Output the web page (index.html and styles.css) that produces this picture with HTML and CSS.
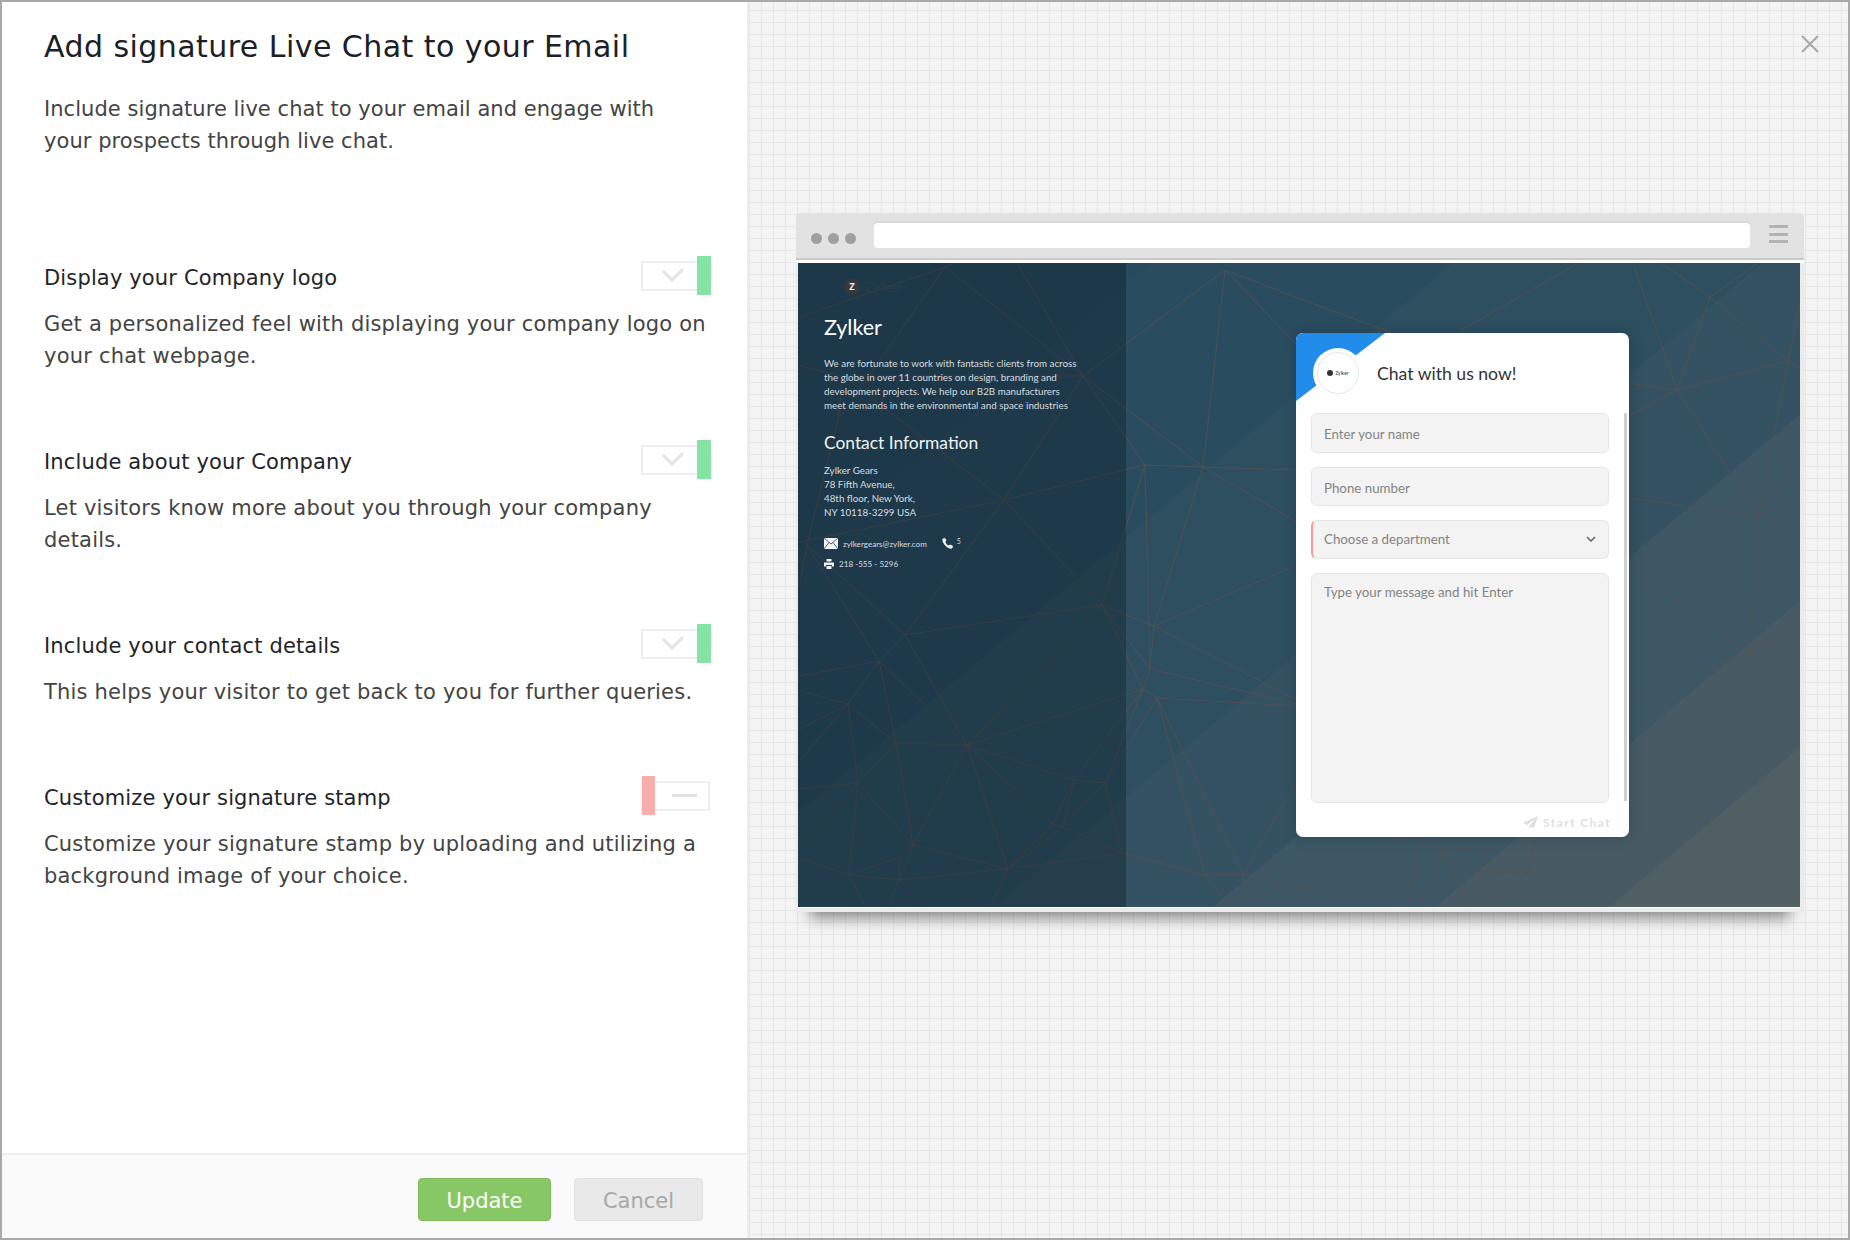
FILE: index.html
```html
<!DOCTYPE html>
<html lang="en">
<head>
    <meta charset="UTF-8">
    <meta name="viewport" content="width=device-width, initial-scale=1.0">
    <title>Add signature Live Chat to your Email</title>
    <link rel="stylesheet" href="styles.css">
</head>
<body>
    <div class="page">
        <div class="settings">
            <div class="settings-body">
                <h1>Add signature Live Chat to your Email</h1>
                <p class="intro">Include signature live chat to your email and engage with<br>your prospects through live chat.</p>

                <div class="option">
                    <div class="option-head">
                        <h2>Display your Company logo</h2>
                        <div class="toggle">
                            <span class="toggle-box">
                                <svg width="24" height="16" viewBox="0 0 24 16"><path d="M2 4l9 9L22 2" fill="none" stroke="#e4e4e4" stroke-width="3"/></svg>
                            </span>
                            <span class="toggle-on"></span>
                        </div>
                    </div>
                    <p>Get a personalized feel with displaying your company logo on<br>your chat webpage.</p>
                </div>

                <div class="option">
                    <div class="option-head">
                        <h2>Include about your Company</h2>
                        <div class="toggle">
                            <span class="toggle-box">
                                <svg width="24" height="16" viewBox="0 0 24 16"><path d="M2 4l9 9L22 2" fill="none" stroke="#e4e4e4" stroke-width="3"/></svg>
                            </span>
                            <span class="toggle-on"></span>
                        </div>
                    </div>
                    <p>Let visitors know more about you through your company<br>details.</p>
                </div>

                <div class="option">
                    <div class="option-head">
                        <h2>Include your contact details</h2>
                        <div class="toggle">
                            <span class="toggle-box">
                                <svg width="24" height="16" viewBox="0 0 24 16"><path d="M2 4l9 9L22 2" fill="none" stroke="#e4e4e4" stroke-width="3"/></svg>
                            </span>
                            <span class="toggle-on"></span>
                        </div>
                    </div>
                    <p>This helps your visitor to get back to you for further queries.</p>
                </div>

                <div class="option">
                    <div class="option-head">
                        <h2>Customize your signature stamp</h2>
                        <div class="toggle">
                            <span class="toggle-off"></span>
                            <span class="toggle-box toggle-box-off"><span class="dash"></span></span>
                        </div>
                    </div>
                    <p>Customize your signature stamp by uploading and utilizing a<br>background image of your choice.</p>
                </div>
            </div>

            <div class="settings-footer">
                <button class="btn-update">Update</button>
                <button class="btn-cancel">Cancel</button>
            </div>
        </div>

        <div class="stage">
            <svg class="close" width="18" height="18" viewBox="0 0 18 18"><path d="M1 1l16 16M17 1L1 17" stroke="#aaa" stroke-width="2.2"/></svg>

            <div class="browser">
                <div class="toolbar">
                    <span class="dot"></span>
                    <span class="dot"></span>
                    <span class="dot"></span>
                    <div class="address"></div>
                    <div class="menu"><span></span><span></span><span></span></div>
                </div>

                <div class="preview">
                    <svg class="mesh" width="1000" height="644" viewBox="0 0 1000 644">
                        <path fill="none" stroke="#5a5050" stroke-opacity="0.8" d="M0 54L145 4L155 0M145 4L38 157L7 282L0 320M145 4L283 113M217 0L283 113M283 113L403 204M283 113L425 7M283 113L345 202M0 103L43 113L283 113M43 113L204 237M43 113L38 157M204 237L283 113M204 237L345 202M204 237L0 279M204 237L302 342M204 237L105 372M7 282L105 372M7 282L79 398M0 413L79 398M105 372L79 398M79 398L48 441M0 428L48 441M0 466L48 441M105 372L302 342M105 372L167 482M79 398L167 482M79 398L96 480M48 441L96 480M48 441L58 520M48 441L0 497M0 526L58 520M58 520L96 480M96 480L167 482M96 480L113 582M167 482L302 342M167 482L343 426M167 482L274 517M167 482L208 606M167 482L253 561M167 482L113 582M58 520L113 582M58 520L49 612M0 583L58 520M113 582L100 594M113 582L208 606M113 582L99 617M100 594L49 612M100 594L99 617M49 612L99 617M0 595L49 612M49 612L65 644M99 617L208 606M99 617L88 644M99 617L130 644M208 606L253 561M208 606L263 564M208 606L322 590M208 606L190 644M253 561L263 564M253 561L274 517M263 564L274 517M263 564L305 520M263 564L322 590M274 517L305 520M274 517L343 426M305 520L343 426M305 520L357 435M305 520L322 590M322 590L405 612M405 612L357 435M443 611L357 435M405 612L443 611M302 342L354 363M302 342L350 406M302 342L343 426M345 202L302 342M345 202L350 406M345 202L403 204M403 204L354 363M354 363L350 406M354 363L497 302M354 363L497 437M350 406L343 426M343 426L357 435M350 406L497 441M357 435L497 443M403 204L497 207M403 204L497 259M403 204L425 7M425 7L497 82M425 7L514 41L593 70M443 611L500 513M405 612L430 644M443 611L452 644M443 611L509 624L610 574M833 0L877 127M861 0L910 34M958 0L910 34M910 34L877 127M910 34L988 98M877 127L988 98M877 127L958 253M829 120L877 127M829 153L877 127M988 98L1000 105M1000 40L988 98M988 98L958 253M958 253L1000 190M958 253L1000 270M830 235L958 253M958 253L950 390M830 305L950 390M950 390L1000 362M950 390L830 430M660 68L778 0M643 587L686 584M643 587L680 609M686 584L680 609M680 609L728 610M728 610L699 635M680 609L699 635M728 610L736 574M686 584L728 610M643 587L610 574M643 587L660 574M680 609L680 644M699 635L695 644M643 587L620 644M643 587L669 644M620 574L607 644"/>
                    </svg>

                    <div class="company">
                        <div class="brand">
                            <span class="brand-mark">Z</span>
                            <span class="brand-name">Zylker</span>
                        </div>
                        <h3>Zylker</h3>
                        <p class="about">We are fortunate to work with fantastic clients from across<br>the globe in over 11 countries on design, branding and<br>development projects. We help our B2B manufacturers<br>meet demands in the environmental and space industries</p>
                        <h4>Contact Information</h4>
                        <p class="about">Zylker Gears<br>78 Fifth Avenue,<br>48th floor, New York,<br>NY 10118-3299 USA</p>
                        <div class="contact-row">
                            <svg width="14" height="11" viewBox="0 0 14 11"><rect width="14" height="11" fill="#f2f4f5"/><path d="M0 0l7 6 7-6M0 11l5-6.5M14 11L9 4.5" fill="none" stroke="#24404f" stroke-width="0.8"/></svg>
                            <span class="contact-mail">zylkergears@zylker.com</span>
                            <svg class="contact-phone" width="11" height="11" viewBox="0 0 11 11"><path d="M1 0.5l2-.5 1.5 2.6L3.3 3.8C3.8 5.4 5.3 7 6.9 7.6l1.2-1.2L11 8l-.6 2c-.4.6-1 .9-1.7.7C4.8 9.800 1.200 6.200.4 2.400.2 1.600.4.900 1 .5z" fill="#f2f4f5"/></svg>
                            <span class="contact-ext">5</span>
                        </div>
                        <div class="contact-row contact-row-fax">
                            <svg width="10" height="10" viewBox="0 0 10 10"><path d="M2.500 0h5v2.500h-5zM0 3.500h10v4H8V6H2v1.500H0zM2.500 7h5v3h-5z" fill="#eef1f2"/></svg>
                            <span class="contact-mail">218 -555 - 5296</span>
                        </div>
                    </div>

                    <div class="chat-card">
                        <div class="chat-corner"></div>
                        <div class="chat-head">
                            <div class="chat-logo">
                                <div class="chat-logo-inner"><i></i><span>Zylker</span></div>
                            </div>
                            <div class="chat-title">Chat with us now!</div>
                        </div>
                        <div class="chat-form">
                            <div class="field field-name">Enter your name</div>
                            <div class="field">Phone number</div>
                            <div class="field field-select">
                                Choose a department
                                <svg width="10" height="6" viewBox="0 0 10 6"><path d="M1 1l4 4 4-4" fill="none" stroke="#666" stroke-width="1.500"/></svg>
                            </div>
                            <div class="field field-area">Type your message and hit Enter</div>
                        </div>
                        <div class="chat-send">
                            <svg width="15" height="13" viewBox="0 0 15 13"><path d="M15 0L0 7l4 2 9-7-7 8v3l2-2.500 3 1.500z" fill="#dedede"/></svg>
                            <span>Start Chat</span>
                        </div>
                        <div class="chat-scroll"></div>
                    </div>
                </div>
            </div>
        </div>
    </div>
</body>
</html>
```

FILE: styles.css
```css
* {
    box-sizing: border-box;
}
body {
    margin: 0;
    font-family: 'DejaVu Sans', sans-serif;
}
.page {
    width: 1850px;
    height: 1240px;
    border: 2px solid #a9a9a9;
    display: flex;
    overflow: hidden;
}

/* left column */
.settings {
    width: 745px;
    display: flex;
    flex-direction: column;
    background: #fff;
}
.settings-body {
    flex: 1;
    padding: 25px 36px 0 42px;
}
h1 {
    margin: 0;
    font-size: 30px;
    line-height: 40px;
    font-weight: 400;
    color: #1a2126;
    letter-spacing: 0.45px;
    white-space: nowrap;
}
.settings-body p {
    font-size: 21px;
    line-height: 32px;
    color: #444;
    white-space: nowrap;
    letter-spacing: 0.2px;
}
.settings-body .intro {
    margin: 26px 0 105px;
    letter-spacing: 0.05px;
}
.option {
    margin-bottom: 74px;
}
.option p {
    margin: 16px 0 0;
}
.option-head {
    display: flex;
    justify-content: space-between;
    align-items: flex-start;
    height: 30px;
}
h2 {
    margin: 0;
    font-size: 21px;
    line-height: 32px;
    font-weight: 400;
    color: #1f2428;
    letter-spacing: 0.15px;
}
.toggle {
    width: 70px;
    height: 39px;
    margin-top: -6px;
    display: flex;
    align-items: center;
}
.toggle-box {
    width: 56px;
    height: 30px;
    border: 2px solid #eee;
    border-right: 0;
    padding: 0 0 2px 6px;
    display: flex;
    align-items: center;
    justify-content: center;
}
.toggle-on {
    width: 14px;
    height: 39px;
    background: #85e3a3;
}
.toggle-off {
    width: 13px;
    height: 39px;
    margin-left: 1px;
    background: #f8adad;
    position: relative;
    z-index: 1;
}
.toggle-box-off {
    width: 69px;
    margin-left: -14px;
    border-right: 2px solid #eee;
    padding: 0 0 0 17px;
    flex-shrink: 0;
}
.dash {
    width: 25px;
    height: 3px;
    background: #e3e3e3;
}
.settings-footer {
    height: 85px;
    border-top: 2px solid #eee;
    background: #fafafa;
    display: flex;
    justify-content: flex-end;
    gap: 23px;
    padding: 23px 44px 0 0;
}
.settings-footer button {
    height: 43px;
    border-radius: 4px;
    font-family: 'DejaVu Sans', sans-serif;
    font-size: 21px;
    padding: 2px 0 0;
}
.btn-update {
    width: 133px;
    background: #88c765;
    border: 1px solid #7dbc5b;
    color: #fff;
}
.btn-cancel {
    width: 129px;
    background: #e9e9e9;
    border: 1px solid #e0e0e0;
    color: #a8a8a8;
}

/* right column */
.stage {
    flex: 1;
    position: relative;
    border-left: 2px solid #eee;
    padding: 211px 0 0 47px;
    background-color: #f4f4f4;
    background-image: linear-gradient(to right, #e7e7e7 1px, transparent 1px), linear-gradient(to bottom, #e7e7e7 1px, transparent 1px);
    background-size: 12px 12px;
    background-position: 0 8px;
}
.close {
    position: absolute;
    top: 33px;
    right: 29px;
}
.browser {
    width: 1008px;
    height: 699px;
    background: #ebebeb;
    border-radius: 5px 5px 0 0;
    box-shadow: 0 20px 14px -14px rgba(0, 0, 0, 0.45);
}
.toolbar {
    height: 50px;
    display: flex;
    align-items: flex-start;
    padding: 10px 0 0 15px;
    background: #e2e2e2;
    border-radius: 5px 5px 0 0;
    border-bottom: 3px solid #fff;
    box-shadow: inset 0 -2px 0 #c9c9c9;
}
.dot {
    width: 11px;
    height: 11px;
    margin: 10px 6px 0 0;
    border-radius: 50%;
    background: #a0a0a0;
}
.address {
    width: 876px;
    height: 25px;
    margin-left: 12px;
    background: #fff;
    border-radius: 4px;
    box-shadow: 0 -2px 0 #d9d9d9;
}
.menu {
    width: 19px;
    margin: 2px 0 0 19px;
}
.menu span {
    display: block;
    height: 3px;
    margin-bottom: 4.5px;
    background: #b3b3b3;
}
.preview {
    position: relative;
    width: 1002px;
    height: 645px;
    margin: 0 4px 0 2px;
    display: flex;
    overflow: hidden;
    font-family: 'Lato', sans-serif;
    border-bottom: 1px solid #fff;
    background: linear-gradient(140deg, #274a5e 0, #274a5e 227px, #2a4c5f 227px, #2a4c5f 421px, #2e4f60 421px, #2e4f60 620px, #345261 620px, #345261 760px, #3d5765 760px, #3d5765 903px, #485b65 903px, #485b65 1015px, #505f61 1015px);
}
.mesh {
    position: absolute;
    top: 0;
    left: 2px;
}
.company {
    position: relative;
    width: 328px;
    padding: 16px 0 0 26px;
    background: rgba(0, 10, 20, 0.28);
    color: #d6dde0;
}
.brand {
    display: flex;
    align-items: center;
    margin-left: 20px;
    height: 16px;
}
.brand-mark {
    width: 16px;
    height: 16px;
    border-radius: 50%;
    background: #38383b;
    color: #eee;
    font-size: 9px;
    font-weight: 900;
    line-height: 16px;
    text-align: center;
}
.brand-name {
    margin-left: 6px;
    font-size: 13px;
    color: #2c3d49;
}
h3 {
    margin: 16px 0 0;
    font-size: 21.5px;
    line-height: 32px;
    font-weight: 400;
    color: #fff;
}
.about {
    margin: 0;
    font-size: 9.8px;
    line-height: 14px;
    white-space: nowrap;
}
h3 + .about {
    margin-top: 13px;
}
h4 {
    margin: 19px 0 0;
    font-size: 17.4px;
    line-height: 24px;
    font-weight: 400;
    color: #f0f3f4;
}
h4 + .about {
    margin-top: 8px;
}
.contact-row {
    display: flex;
    align-items: center;
    height: 13px;
    margin-top: 18px;
    font-size: 8.1px;
}
.contact-row-fax {
    margin-top: 7px;
}
.contact-mail {
    margin-left: 5px;
}
.contact-phone {
    margin-left: 15px;
}
.contact-ext {
    margin: -5px 0 0 4px;
    font-size: 7px;
}

/* chat card */
.chat-card {
    position: relative;
    flex-shrink: 0;
    width: 333px;
    height: 504px;
    margin: 70px 0 0 170px;
    background: #fff;
    border-radius: 7px;
    box-shadow: 0 0 14px rgba(20, 50, 60, 0.4);
    overflow: hidden;
}
.chat-corner {
    position: absolute;
    top: 0;
    left: 0;
    width: 89px;
    height: 68px;
    background: #218ce9;
    clip-path: polygon(0 0, 100% 0, 0 100%);
}
.chat-head {
    position: relative;
    height: 80px;
    display: flex;
    align-items: center;
    padding-left: 17px;
}
.chat-logo {
    width: 50px;
    height: 50px;
    padding: 4px;
    border-radius: 50%;
    background: #fff;
}
.chat-logo-inner {
    width: 42px;
    height: 42px;
    border: 1px solid #e6e6e6;
    border-radius: 50%;
    display: flex;
    align-items: center;
    justify-content: center;
    font-size: 5px;
    color: #333;
}
.chat-logo-inner i {
    width: 6px;
    height: 6px;
    margin-right: 2px;
    border-radius: 50%;
    background: #333;
}
.chat-title {
    margin-left: 14px;
    font-size: 17.6px;
    color: #333;
}
.chat-form {
    padding: 0 20px 0 15px;
    display: flex;
    flex-direction: column;
    gap: 14px;
}
.field {
    height: 39px;
    padding: 2px 12px 0;
    display: flex;
    align-items: center;
    justify-content: space-between;
    background: #f3f3f3;
    border: 1px solid #e5e5e5;
    border-radius: 6px;
    font-size: 13.3px;
    color: #838383;
}
.field-name {
    height: 40px;
}
.field-select {
    border-left: 2px solid #fb9a9a;
    padding: 0 12px 1px 11px;
}
.field-area {
    height: 230px;
    align-items: flex-start;
    padding-top: 10px;
}
.chat-send {
    margin: 12px 18px 0 0;
    display: flex;
    justify-content: flex-end;
    align-items: center;
    gap: 5px;
    font-size: 12px;
    font-weight: 700;
    letter-spacing: 1.4px;
    color: #e0e0e0;
}
.chat-scroll {
    position: absolute;
    top: 80px;
    right: 2px;
    width: 3px;
    height: 388px;
    background: #cfcfcf;
}
```
